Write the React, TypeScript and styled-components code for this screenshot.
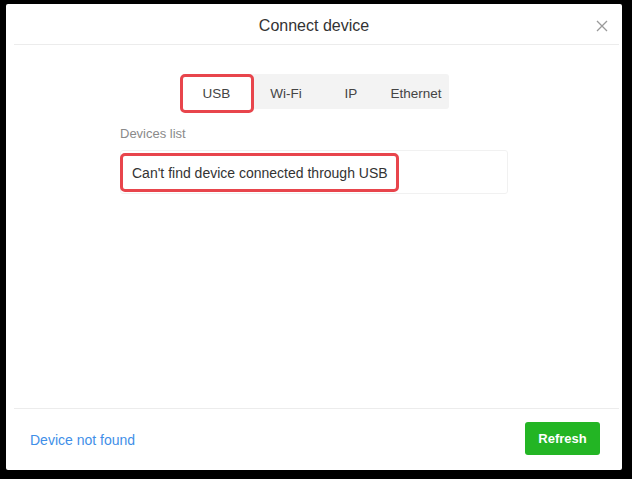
import React, { useState } from "react";
import styled, { createGlobalStyle } from "styled-components";

const GlobalStyle = createGlobalStyle`
  html, body {
    margin: 0;
    padding: 0;
    background: #000000;
  }
  body {
    font-family: "Liberation Sans", Arial, sans-serif;
    -webkit-font-smoothing: antialiased;
  }
`;

const Backdrop = styled.div`
  width: 632px;
  height: 479px;
  padding: 4px 10px 9px 6px;
  box-sizing: border-box;
  background: #000000;
`;

const Dialog = styled.div`
  width: 616px;
  height: 466px;
  background: #ffffff;
  border-radius: 2px;
  display: flex;
  flex-direction: column;
  box-sizing: border-box;
  overflow: hidden;
`;

const Header = styled.div`
  height: 40px;
  position: relative;
  display: flex;
  align-items: center;
  justify-content: center;
  padding-top: 3px;
  box-sizing: border-box;
`;

const Title = styled.h2`
  margin: 0;
  font-size: 16px;
  font-weight: 400;
  color: #333333;
`;

const CloseButton = styled.button`
  position: absolute;
  right: 12px;
  top: 14px;
  width: 16px;
  height: 16px;
  padding: 0;
  border: none;
  background: transparent;
  display: flex;
  align-items: center;
  justify-content: center;
  cursor: pointer;
`;

const Divider = styled.hr`
  margin: 0 3px 0 8px;
  border: none;
  border-top: 1px solid #ececec;
  height: 0;
`;

const Body = styled.div`
  flex: 1;
  display: flex;
  flex-direction: column;
  align-items: center;
  padding-top: 29px;
`;

const Segmented = styled.div`
  display: flex;
  align-items: flex-start;
  height: 35px;
  background: #f3f3f3;
  border-radius: 3px;
  margin-left: 2px;
`;

const Tab = styled.button<{ $active?: boolean }>`
  width: ${(p) => (p.$active ? "74px" : "65px")};
  height: ${(p) => (p.$active ? "39px" : "35px")};
  margin: ${(p) => (p.$active ? "0 0 0 -2px" : "0")};
  padding: 0;
  box-sizing: border-box;
  border: ${(p) => (p.$active ? "3px solid #e8454c" : "none")};
  border-radius: ${(p) => (p.$active ? "5px" : "0")};
  background: ${(p) => (p.$active ? "#ffffff" : "transparent")};
  font-family: "Liberation Sans", Arial, sans-serif;
  font-size: 13.5px;
  color: #444444;
  cursor: pointer;
  padding-top: ${(p) => (p.$active ? "0" : "3px")};
`;

const Content = styled.div`
  width: 388px;
  margin-top: 16px;
  display: flex;
  flex-direction: column;
`;

const Label = styled.div`
  font-size: 13px;
  color: #8a8a8a;
  line-height: 18px;
  margin-bottom: 7px;
`;

const DeviceBox = styled.div`
  height: 44px;
  border: 1px solid #f1f1f1;
  border-radius: 3px;
  box-sizing: border-box;
  display: flex;
  align-items: center;
`;

const EmptyNote = styled.div`
  height: 39px;
  box-sizing: border-box;
  border: 3px solid #e8454c;
  border-radius: 5px;
  padding: 1px 8px 0 9px;
  margin-left: -1px;
  display: flex;
  align-items: center;
  font-size: 14px;
  color: #333333;
`;

const Footer = styled.div`
  height: 61px;
  display: flex;
  align-items: center;
  justify-content: space-between;
  padding: 0 22px 0 24px;
`;

const Link = styled.a`
  font-size: 14px;
  color: #3f8fe8;
  text-decoration: none;
  cursor: pointer;
`;

const PrimaryButton = styled.button`
  height: 33px;
  width: 75px;
  margin-bottom: 2px;
  border: none;
  border-radius: 3px;
  background: #23b524;
  color: #ffffff;
  font-family: "Liberation Sans", Arial, sans-serif;
  font-size: 13px;
  font-weight: 700;
  cursor: pointer;
`;

const tabs = ["USB", "Wi-Fi", "IP", "Ethernet"];

export default function App() {
  const [active, setActive] = useState("USB");
  return (
    <>
      <GlobalStyle />
      <Backdrop>
        <Dialog>
          <Header>
            <Title>Connect device</Title>
            <CloseButton aria-label="Close">
              <svg width="12" height="12" viewBox="0 0 12 12">
                <path
                  d="M1 1 L11 11 M11 1 L1 11"
                  stroke="#9a9a9a"
                  strokeWidth="1.3"
                  fill="none"
                />
              </svg>
            </CloseButton>
          </Header>
          <Divider />
          <Body>
            <Segmented>
              {tabs.map((t) => (
                <Tab key={t} $active={t === active} onClick={() => setActive(t)}>
                  {t}
                </Tab>
              ))}
            </Segmented>
            <Content>
              <Label>Devices list</Label>
              <DeviceBox>
                <EmptyNote>Can't find device connected through USB</EmptyNote>
              </DeviceBox>
            </Content>
          </Body>
          <Divider />
          <Footer>
            <Link>Device not found</Link>
            <PrimaryButton>Refresh</PrimaryButton>
          </Footer>
        </Dialog>
      </Backdrop>
    </>
  );
}
